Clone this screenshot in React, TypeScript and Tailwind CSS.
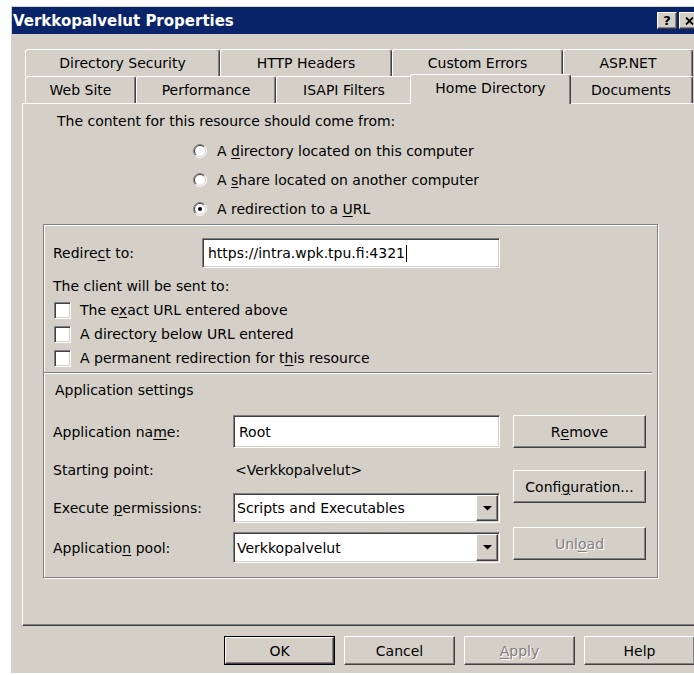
import type { ReactNode } from "react";

// classic 3D edges
const raised =
  "border border-t-white border-l-white border-r-[#404040] border-b-[#404040] shadow-[inset_-1px_-1px_0_#808080] bg-[#d4d0c8]";
const sunken =
  "border border-t-[#808080] border-l-[#808080] border-r-white border-b-white shadow-[inset_1px_1px_0_#404040,inset_-1px_-1px_0_#d4d0c8] bg-white";

function U({ children }: { children: ReactNode }) {
  return <span className="underline decoration-1 underline-offset-[2px]">{children}</span>;
}

function Tab({ label, w, active = false }: { label: string; w: string; active?: boolean }) {
  if (active) {
    return (
      <div
        className={`${w} relative z-10 -mx-[2px] -mt-[2px] flex h-[30px] justify-center rounded-t-[3px] border-l border-r border-t border-l-white border-t-white border-r-[#404040] bg-[#d4d0c8] pt-[4px] shadow-[inset_-1px_0_0_#808080]`}
      >
        {label}
      </div>
    );
  }
  return (
    <div
      className={`${w} flex h-full justify-center rounded-t-[3px] border-l border-r border-t border-l-white border-t-white border-r-[#404040] pt-[4px] shadow-[inset_-1px_0_0_#808080]`}
    >
      {label}
    </div>
  );
}

function Radio({ checked = false }: { checked?: boolean }) {
  return (
    <svg width="14" height="14" viewBox="0 0 14 14" className="shrink-0">
      <circle cx="7" cy="7" r="6" fill="#fff" />
      <path d="M2.4 11.6A6.5 6.5 0 0 1 11.6 2.4" fill="none" stroke="#808080" />
      <path d="M11.6 2.4A6.5 6.5 0 0 1 2.4 11.6" fill="none" stroke="#fff" />
      <path d="M3.1 10.9A5.5 5.5 0 0 1 10.9 3.1" fill="none" stroke="#404040" />
      <path d="M10.9 3.1A5.5 5.5 0 0 1 3.1 10.9" fill="none" stroke="#d4d0c8" />
      {checked && <circle cx="7" cy="7" r="2" fill="#000" />}
    </svg>
  );
}

function Check({ children }: { children: ReactNode }) {
  return (
    <div className="flex h-[24px] items-center gap-[9px] pl-[10px]">
      <div className={`${sunken} h-[17px] w-[17px] shrink-0`} />
      <span>{children}</span>
    </div>
  );
}

function Button({
  children,
  size,
  disabled = false,
  primary = false,
}: {
  children: ReactNode;
  size: string;
  disabled?: boolean;
  primary?: boolean;
}) {
  const face = (
    <div
      className={`${raised} flex h-full w-full items-center justify-center ${
        disabled ? "text-[#808080] [text-shadow:1px_1px_0_#fff]" : "text-black"
      }`}
    >
      {children}
    </div>
  );
  return <div className={`${size} shrink-0 ${primary ? "border border-black" : ""}`}>{face}</div>;
}

function Select({ value }: { value: string }) {
  return (
    <div className={`${sunken} flex h-full w-[267px] p-px`}>
      <div className="flex flex-1 items-center pl-[2px]">{value}</div>
      <div className={`${raised} flex w-[22px] items-center justify-center`}>
        <svg width="9" height="5" viewBox="0 0 9 5">
          <polygon points="0,0 9,0 4.5,4.5" fill="#000" />
        </svg>
      </div>
    </div>
  );
}

export default function App() {
  return (
    <div className="h-[675px] w-[694px] overflow-hidden bg-white font-['DejaVu_Sans',sans-serif] text-[14px] leading-[18px] text-black">
      <div className="ml-[11px] mt-[6px] h-[667px] w-[720px] bg-[#d4d0c8] pl-px pt-px">
        {/* caption bar */}
        <div className="flex h-[27px] w-[690px] items-center bg-[#0a246a] pl-px">
          <span className="text-[15px] font-bold text-white">Verkkopalvelut Properties</span>
          <div className="ml-auto mr-[3px] flex gap-[2px]">
            <div className={`${raised} flex h-[17px] w-[20px] items-center justify-center text-[13px] font-bold leading-none`}>
              ?
            </div>
            <div className={`${raised} flex h-[17px] w-[20px] items-center justify-center`}>
              <svg width="9" height="8" viewBox="0 0 9 8">
                <path d="M1 0.5L8 7.5M8 0.5L1 7.5" stroke="#000" strokeWidth="1.8" />
              </svg>
            </div>
          </div>
        </div>

        {/* tab strip */}
        <div className="ml-[13px] mt-[15px] flex h-[27px]">
          <Tab label="Directory Security" w="w-[195px]" />
          <Tab label="HTTP Headers" w="w-[172px]" />
          <Tab label="Custom Errors" w="w-[171px]" />
          <Tab label="ASP.NET" w="w-[130px]" />
        </div>
        <div className="ml-[13px] flex h-[27px] items-start">
          <Tab label="Web Site" w="w-[111px]" />
          <Tab label="Performance" w="w-[140px]" />
          <Tab label="ISAPI Filters" w="w-[136px]" />
          <Tab label="Home Directory" w="w-[161px]" active />
          <Tab label="Documents" w="w-[124px]" />
        </div>

        {/* Home Directory page */}
        <div className="relative ml-[10px] h-[523px] w-[690px] border-b border-l border-t border-b-[#404040] border-l-white border-t-white shadow-[inset_0_-1px_0_#808080]">
          <div className="mt-[8px] flex h-[18px] items-center pl-[34px]">
            The content for this resource should come from:
          </div>
          <div className="mt-[6px] pl-[170px]">
            <div className="flex h-[29px] items-center gap-[10px]">
              <Radio />
              <span>
                A <U>d</U>irectory located on this computer
              </span>
            </div>
            <div className="flex h-[29px] items-center gap-[10px]">
              <Radio />
              <span>
                A <U>s</U>hare located on another computer
              </span>
            </div>
            <div className="flex h-[29px] items-center gap-[10px]">
              <Radio checked />
              <span>
                A redirection to a <U>U</U>RL
              </span>
            </div>
          </div>

          {/* etched group */}
          <div className="ml-[20px] mt-[1px] h-[354px] w-[615px] border border-[#808080] shadow-[inset_1px_1px_0_#fff,1px_1px_0_#fff]">
            <div className="mt-[13px] flex h-[30px] items-center">
              <div className="w-[158px] pl-[9px]">
                Redire<U>c</U>t to:
              </div>
              <div className={`${sunken} flex h-full w-[298px] items-center pl-[5px]`}>
                https://intra.wpk.tpu.fi:4321
                <span className="ml-px h-[17px] w-px bg-black" />
              </div>
            </div>
            <div className="mt-[9px] flex h-[18px] items-center pl-[9px]">The client will be sent to:</div>
            <div className="mt-[3px]">
              <Check>
                The e<U>x</U>act URL entered above
              </Check>
              <Check>
                A director<U>y</U> below URL entered
              </Check>
              <Check>
                A permanent redirection for t<U>h</U>is resource
              </Check>
            </div>
            <div className="mt-[2px] h-[2px] w-[608px] border-b border-t border-b-white border-t-[#808080]" />
            <div className="mt-[7px] flex h-[18px] items-center pl-[11px]">Application settings</div>

            <div className="mt-[16px] flex">
              <div className="pl-[9px]">
                <div className="flex h-[33px] items-center">
                  <div className="w-[180px]">
                    Application na<U>m</U>e:
                  </div>
                  <div className={`${sunken} flex h-full w-[267px] items-center pl-[5px]`}>Root</div>
                </div>
                <div className="mt-[13px] flex h-[18px] items-center">
                  <div className="w-[180px]">Starting point:</div>
                  <div className="pl-[2px]">&lt;Verkkopalvelut&gt;</div>
                </div>
                <div className="mt-[14px] flex h-[30px] items-center">
                  <div className="w-[180px]">
                    Execute <U>p</U>ermissions:
                  </div>
                  <Select value="Scripts and Executables" />
                </div>
                <div className="mt-[9px] flex h-[31px] items-center">
                  <div className="w-[180px]">
                    Applicatio<U>n</U> pool:
                  </div>
                  <Select value="Verkkopalvelut" />
                </div>
              </div>
              <div className="ml-[13px] flex flex-col">
                <Button size="h-[33px] w-[133px]">
                  R<U>e</U>move
                </Button>
                <div className="mt-[22px]">
                  <Button size="h-[33px] w-[133px]">
                    Confi<U>g</U>uration...
                  </Button>
                </div>
                <div className="mt-[24px]">
                  <Button size="h-[33px] w-[133px]" disabled>
                    Unl<U>o</U>ad
                  </Button>
                </div>
              </div>
            </div>
          </div>
        </div>

        {/* dialog buttons */}
        <div className="ml-[212px] mt-[10px] flex h-[29px] gap-[9px]">
          <Button size="h-[29px] w-[111px]" primary>
            OK
          </Button>
          <Button size="h-[29px] w-[111px]">Cancel</Button>
          <Button size="h-[29px] w-[111px]" disabled>
            <U>A</U>pply
          </Button>
          <Button size="h-[29px] w-[111px]">Help</Button>
        </div>
      </div>
    </div>
  );
}
